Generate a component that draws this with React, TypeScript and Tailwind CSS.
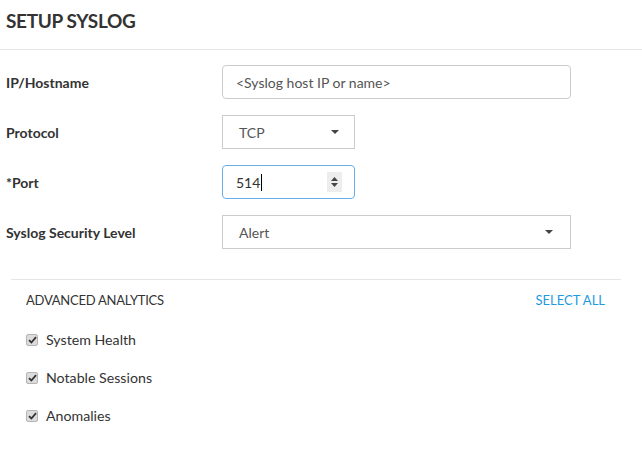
import React from "react";

const font = { fontFamily: "Lato, 'Open Sans', sans-serif" };

function Caret() {
  return (
    <svg width="8" height="4" viewBox="0 0 8 4" className="shrink-0">
      <path d="M0 0 H8 L4 4 Z" fill="#444" />
    </svg>
  );
}

function Check({ label }: { label: string }) {
  return (
    <div className="flex items-center h-[20px]">
      <div className="w-[12px] h-[12px] rounded-[2px] border border-[#b5b5b5] bg-[#dcdcdc] flex items-center justify-center">
        <svg width="9" height="8" viewBox="0 0 9 8">
          <path d="M1 4.2 L3.4 6.5 L8 1.2" stroke="#333" strokeWidth="1.8" fill="none" />
        </svg>
      </div>
      <span className="ml-[8px] text-[14.2px] text-[#333]">{label}</span>
    </div>
  );
}

export default function App() {
  return (
    <div className="w-[642px] h-[449px] bg-white text-[#333]" style={font}>
      <div className="h-[50px] border-b border-[#e6e6e6] pl-[6px] pt-[7px]">
        <h1 className="text-[19px] font-bold text-[#333] tracking-[-0.35px]">SETUP SYSLOG</h1>
      </div>
      <div className="pl-[6px] pt-[15px] flex flex-col gap-[16px]">
        <div className="flex items-center h-[34px]">
          <label className="w-[216px] text-[14px] font-bold">IP/Hostname</label>
          <div className="w-[349px] h-[34px] border border-[#cccccc] rounded-[4px] flex items-center px-[13px] text-[14px] text-[#555]">
            &lt;Syslog host IP or name&gt;
          </div>
        </div>
        <div className="flex items-center h-[34px]">
          <label className="w-[216px] text-[14px] font-bold">Protocol</label>
          <div className="w-[133px] h-[34px] border border-[#cccccc] flex items-center justify-between pl-[16px] pr-[15px] text-[14px] text-[#555]">
            <span>TCP</span>
            <Caret />
          </div>
        </div>
        <div className="flex items-center h-[34px]">
          <label className="w-[216px] text-[14px] font-bold">*Port</label>
          <div className="w-[133px] h-[34px] border border-[#66afe9] rounded-[4px] flex items-center justify-between pl-[13px] pr-[12px] text-[14px] text-[#333]">
            <span className="flex items-center">514<span className="inline-block w-px h-[17px] bg-black ml-px" /></span>
            <div className="w-[15px] h-[20px] bg-[#ededed] flex flex-col items-center justify-center gap-[2px]">
              <svg width="7" height="4" viewBox="0 0 7 4"><path d="M0 4 L3.5 0 L7 4 Z" fill="#444" /></svg>
              <svg width="7" height="4" viewBox="0 0 7 4"><path d="M0 0 H7 L3.5 4 Z" fill="#444" /></svg>
            </div>
          </div>
        </div>
        <div className="flex items-center h-[34px]">
          <label className="w-[216px] text-[14px] font-bold">Syslog Security Level</label>
          <div className="w-[349px] h-[34px] border border-[#cccccc] flex items-center justify-between pl-[16px] pr-[17px] text-[14px] text-[#555]">
            <span>Alert</span>
            <Caret />
          </div>
        </div>
      </div>
      <div className="mx-[11px] w-[610px] mt-[30px] border-t border-[#e6e6e6] pl-[15px] pr-[16px]">
        <div className="flex items-center justify-between h-[40px] pt-[2px]">
          <span className="text-[13px] text-[#333] tracking-[-0.25px]">ADVANCED ANALYTICS</span>
          <span className="text-[13px] text-[#1e9ae0]">SELECT ALL</span>
        </div>
        <div className="flex flex-col gap-[18px] mt-[10px]">
          <Check label="System Health" />
          <Check label="Notable Sessions" />
          <Check label="Anomalies" />
        </div>
      </div>
    </div>
  );
}
